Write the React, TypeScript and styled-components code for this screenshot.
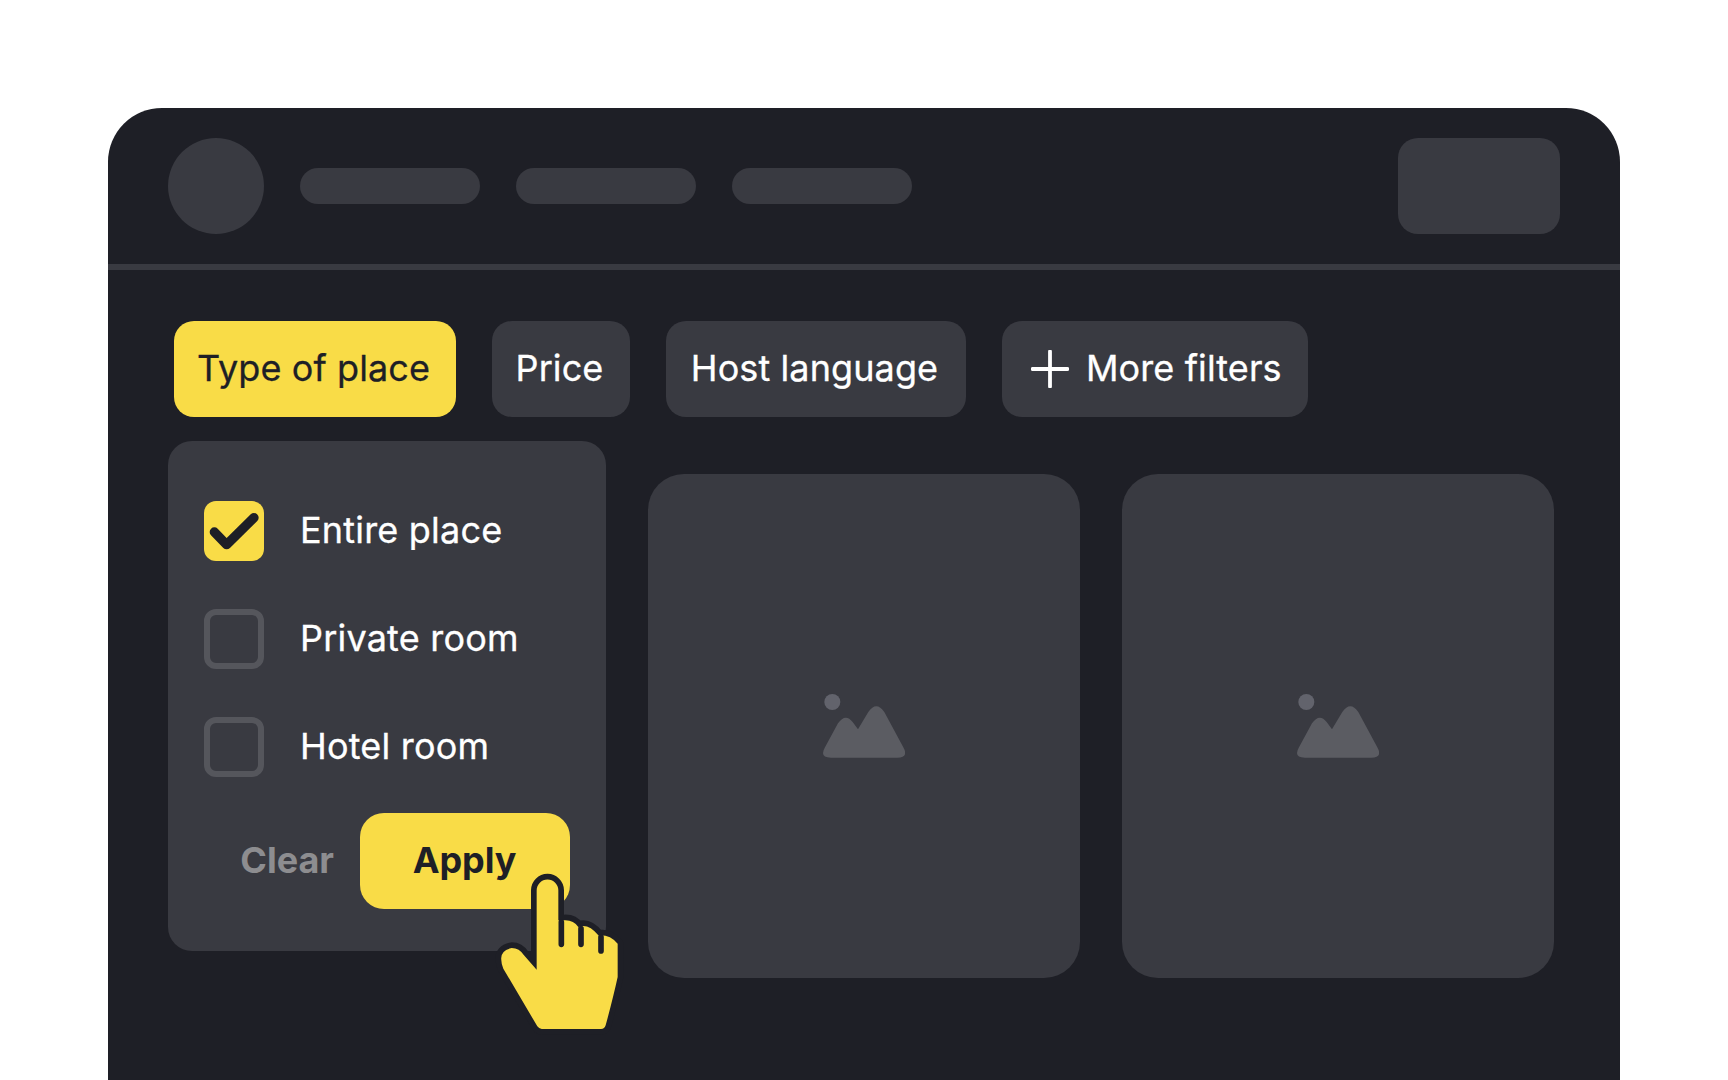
import React from "react";
import styled, { createGlobalStyle } from "styled-components";

const DARK = "#1e1f26";
const BLOCK = "#393a41";
const YELLOW = "#f9dc47";

const GlobalStyle = createGlobalStyle`
  html, body {
    margin: 0;
    height: 100%;
    overflow: hidden;
    background: #ffffff;
  }
  body {
    font-family: Inter, "Liberation Sans", sans-serif;
  }
`;

export default function App() {
  return (
    <Page>
      <GlobalStyle />
      <Window>
        <Header>
          <Avatar />
          <NavPill />
          <NavPill />
          <NavPill />
          <HeaderButton />
        </Header>
        <Body>
          <Filters>
            <Chip active width={282}>
              Type of place
            </Chip>
            <Chip width={138}>Price</Chip>
            <Chip width={300}>Host language</Chip>
            <MoreChip width={306}>
              <PlusIcon />
              More filters
            </MoreChip>
          </Filters>
          <Content>
            <Panel>
              <Options>
                <Option>
                  <CheckBox checked>
                    <CheckIcon />
                  </CheckBox>
                  <OptionLabel>Entire place</OptionLabel>
                </Option>
                <Option>
                  <CheckBox />
                  <OptionLabel>Private room</OptionLabel>
                </Option>
                <Option>
                  <CheckBox />
                  <OptionLabel>Hotel room</OptionLabel>
                </Option>
              </Options>
              <Actions>
                <ClearButton>Clear</ClearButton>
                <ApplyButton>Apply</ApplyButton>
              </Actions>
              <HandIcon />
            </Panel>
            <Listing>
              <MountainIcon />
            </Listing>
            <Listing>
              <MountainIcon />
            </Listing>
          </Content>
        </Body>
      </Window>
    </Page>
  );
}

function PlusIcon() {
  return (
    <svg width="38" height="38" viewBox="0 0 38 38" fill="none">
      <path
        d="M19 1.5V36.5M1.5 19H36.5"
        stroke="#ffffff"
        strokeWidth="3.8"
        strokeLinecap="round"
      />
    </svg>
  );
}

function CheckIcon() {
  return (
    <svg width="60" height="60" viewBox="0 0 180 180" fill="none">
      <path
        d="M31 93L68 131L150 50"
        stroke={DARK}
        strokeWidth="28"
        strokeLinecap="round"
        strokeLinejoin="round"
      />
    </svg>
  );
}

function MountainIcon() {
  return (
    <svg width="82.3" height="63.7" viewBox="98 72 247 191">
      <circle cx="126" cy="96" r="24" fill="#62636c" />
      <path
        d="M122 263Q86 263 104 232L143 160Q165 128 187 156L203 178L234 126Q258 92 282 126L339 232Q356 263 321 263Z"
        fill="#5b5c62"
      />
    </svg>
  );
}

function HandIcon() {
  return (
    <Hand width="133.33" height="166.67" viewBox="150 260 400 500">
      <path
        d="M184 540Q180 510 215 503Q238 503 252 525L290 568V330A32.5 32.5 0 0 1 355 330V420H372Q400 418 415 440Q445 428 475 465Q510 462 533 490V590Q520 650 497 735Q494 746 483 746H305Q298 746 292 738L190 565Q184 552 184 540Z"
        fill={YELLOW}
        stroke={DARK}
        strokeWidth="34"
        strokeLinejoin="round"
        paintOrder="stroke"
      />
      <path
        d="M364 425V492M423 445V492M483 470V512"
        fill="none"
        stroke={DARK}
        strokeWidth="17"
        strokeLinecap="round"
      />
    </Hand>
  );
}

const Page = styled.div`
  height: 1080px;
  padding: 108px 108px 0;
  box-sizing: border-box;
  overflow: hidden;
`;

const Window = styled.div`
  height: 972px;
  background: ${DARK};
  border-radius: 54px 54px 0 0;
  overflow: hidden;
`;

const Header = styled.header`
  display: flex;
  align-items: center;
  gap: 36px;
  height: 156px;
  padding: 0 60px;
  border-bottom: 6px solid ${BLOCK};
`;

const Avatar = styled.div`
  width: 96px;
  height: 96px;
  border-radius: 50%;
  background: ${BLOCK};
`;

const NavPill = styled.div`
  width: 180px;
  height: 36px;
  border-radius: 18px;
  background: ${BLOCK};
`;

const HeaderButton = styled.div`
  width: 162px;
  height: 96px;
  margin-left: auto;
  border-radius: 20px;
  background: ${BLOCK};
`;

const Body = styled.main`
  padding: 51px 60px 0;
`;

const Filters = styled.div`
  display: flex;
  gap: 36px;
  margin-left: 6px;
`;

const Chip = styled.div<{ active?: boolean; width: number }>`
  display: flex;
  align-items: center;
  justify-content: center;
  width: ${(props) => props.width}px;
  height: 96px;
  padding: 0 3px 2px 0;
  box-sizing: border-box;
  border-radius: 20px;
  background: ${(props) => (props.active ? YELLOW : BLOCK)};
  color: ${(props) => (props.active ? DARK : "#ffffff")};
  font-size: 36px;
  font-weight: 400;
  letter-spacing: 0.1px;
  -webkit-text-stroke: 0.3px currentColor;
`;

const MoreChip = styled(Chip)`
  justify-content: flex-start;
  gap: 17px;
  padding-left: 29px;

  svg {
    margin-top: 2px;
  }
`;

const Content = styled.div`
  display: flex;
  align-items: flex-start;
  gap: 42px;
  margin-top: 24px;
`;

const Panel = styled.section`
  position: relative;
  width: 438px;
  height: 510px;
  padding: 60px 36px 0;
  box-sizing: border-box;
  border-radius: 24px;
  background: ${BLOCK};
`;

const Options = styled.div`
  display: flex;
  flex-direction: column;
  gap: 48px;
`;

const Option = styled.label`
  display: flex;
  align-items: center;
  gap: 36px;
  height: 60px;
`;

const OptionLabel = styled.span`
  margin-top: -2px;
  color: #ffffff;
  font-size: 36px;
  font-weight: 400;
  letter-spacing: 0.2px;
  -webkit-text-stroke: 0.3px currentColor;
`;

const CheckBox = styled.span<{ checked?: boolean }>`
  display: block;
  width: 60px;
  height: 60px;
  box-sizing: border-box;
  border-radius: 12px;
  border: ${(props) => (props.checked ? "none" : "6px solid #55565c")};
  background: ${(props) => (props.checked ? YELLOW : "transparent")};
`;

const Actions = styled.div`
  display: flex;
  justify-content: flex-end;
  align-items: center;
  gap: 26px;
  margin-top: 36px;
`;

const ClearButton = styled.div`
  padding-bottom: 2px;
  color: #8d8d90;
  font-size: 36px;
  font-weight: 700;
`;

const ApplyButton = styled.div`
  display: flex;
  align-items: center;
  justify-content: center;
  width: 210px;
  height: 96px;
  padding: 0 1px 2px 0;
  box-sizing: border-box;
  border-radius: 24px;
  background: ${YELLOW};
  color: ${DARK};
  font-size: 36px;
  font-weight: 700;
  letter-spacing: -0.1px;
`;

const Hand = styled.svg`
  position: absolute;
  left: 322px;
  top: 425.67px;
  overflow: visible;
`;

const Listing = styled.article`
  display: flex;
  align-items: center;
  justify-content: center;
  flex: none;
  width: 432px;
  height: 504px;
  margin-top: 33px;
  border-radius: 36px;
  background: ${BLOCK};
`;
